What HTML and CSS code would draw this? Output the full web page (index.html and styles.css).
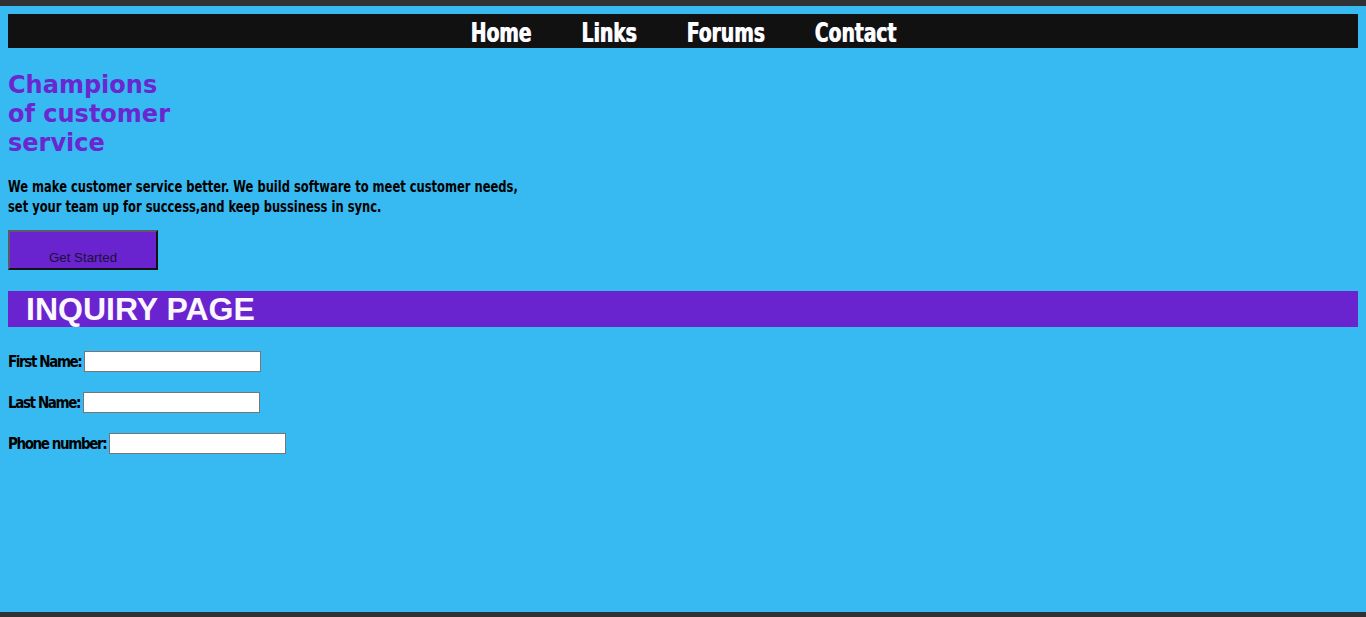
FILE: index.html
```html
<!DOCTYPE html>
<html lang="en">
<head>
<meta charset="utf-8">
<title>Champions of customer service</title>
<link rel="stylesheet" href="styles.css">
</head>
<body>
<nav class="topnav">
  <div class="navgroup">
    <a class="navlink" href="#">Home</a>
    <a class="navlink" href="#">Links</a>
    <a class="navlink" href="#">Forums</a>
    <a class="navlink" href="#">Contact</a>
  </div>
</nav>
<section class="hero">
  <h2 class="hero-title">Champions of customer service</h2>
  <p class="hero-text">We make customer service better. We build software to meet customer needs,<br>set your team up for success,and keep bussiness in sync.</p>
  <button class="cta" type="button">Get Started</button>
</section>
<h1 class="inquiry-title">INQUIRY PAGE</h1>
<form class="inquiry-form">
  <div class="row"><label class="lbl" for="fn">First Name:</label><input class="field" id="fn" type="text"></div>
  <div class="row"><label class="lbl" for="ln">Last Name:</label><input class="field" id="ln" type="text"></div>
  <div class="row"><label class="lbl" for="ph">Phone number:</label><input class="field" id="ph" type="text"></div>
</form>
</body>
</html>
```
FILE: styles.css
```css
html {
  background: #2f3134;
  padding: 6px 0 5px;
  height: 617px;
  box-sizing: border-box;
}
body {
  margin: 0;
  padding: 8px;
  background: #37b9f1;
  height: 100%;
  box-sizing: border-box;
}
.topnav {
  background: #111111;
  height: 34px;
  display: flex;
  justify-content: center;
  align-items: center;
}
.navgroup {
  display: flex;
  gap: 65px;
  transform: translateY(2px) scaleX(0.77);
  transform-origin: center;
}
.navlink {
  font-family: "DejaVu Sans Condensed", "DejaVu Sans", sans-serif;
  font-weight: bold;
  font-size: 27px;
  line-height: 34px;
  color: #ffffff;
  text-decoration: none;
  text-shadow: 1px 0 0 #e6e0ff;
}
.hero {
  display: flex;
  flex-direction: column;
  align-items: flex-start;
}
.hero-title {
  font-family: "DejaVu Sans", sans-serif;
  font-weight: bold;
  font-size: 24px;
  line-height: 29px;
  color: #6a27d0;
  width: 175px;
  margin: 23px 0 0;
}
.hero-text {
  font-family: "DejaVu Sans Condensed", "DejaVu Sans", sans-serif;
  font-weight: bold;
  font-size: 16px;
  line-height: 20px;
  color: #000;
  margin: 19px 0 13px;
  white-space: nowrap;
  transform: scaleX(0.8);
  transform-origin: left top;
}
.cta {
  width: 150px;
  height: 40px;
  background: #6a24cf;
  border: 2px outset #5a5a6a;
  font-family: "Liberation Sans", Arial, sans-serif;
  font-size: 13.33px;
  color: #1a1033;
  padding: 14px 0 0;
  margin: 0;
}
.inquiry-title {
  background: #6a24cf;
  color: #fbf7ff;
  font-family: "Liberation Sans", Arial, sans-serif;
  font-weight: bold;
  font-size: 32px;
  line-height: 36px;
  height: 36px;
  padding: 0 0 0 18px;
  margin: 21px 0 0;
}
.inquiry-form {
  display: flex;
  flex-direction: column;
  gap: 20px;
  margin-top: 24px;
}
.row {
  display: flex;
  align-items: center;
  gap: 3px;
}
.lbl {
  font-family: "DejaVu Sans Condensed", "DejaVu Sans", sans-serif;
  font-weight: bold;
  font-size: 15px;
  letter-spacing: -1.4px;
  color: #000;
}
.field {
  width: 177px;
  height: 21px;
  box-sizing: border-box;
  border: 1px solid #767676;
  background: #fff;
  padding: 1px 2px;
  margin: 0;
}
```
